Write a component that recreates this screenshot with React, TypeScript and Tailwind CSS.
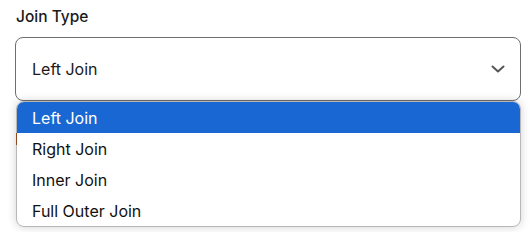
import React from "react";

export default function App() {
  const items = ["Left Join", "Right Join", "Inner Join", "Full Outer Join"];
  return (
    <div className="w-[530px] h-[232px] bg-white overflow-hidden" style={{ fontFamily: "Inter, 'Noto Sans', sans-serif" }}>
      <div className="pl-[15px] pr-[9px] pt-[6px]">
        <div className="text-[15.5px] font-medium leading-[22px] text-[#1a1a1a] pl-px">Join Type</div>
        <div className="relative mt-[9px]">
          <div className="h-[64px] rounded-[8px] border border-[#6e6e6e] bg-white flex items-center justify-between pl-[16px] pr-[14px]">
            <span className="text-[16px] text-[#1a1a1a]">Left Join</span>
            <svg width="16" height="16" viewBox="0 0 16 16" fill="none">
              <path d="M2.5 5.5 L8 10.5 L13.5 5.5" stroke="#555" strokeWidth="2" strokeLinecap="round" strokeLinejoin="round" />
            </svg>
          </div>
          <div className="absolute left-[1px] right-0 top-[64px] rounded-[8px] border border-[#b8b8b8] bg-white overflow-hidden shadow-[0_0_10px_rgba(0,0,0,0.18)]">
            {items.map((it, i) => (
              <div
                key={it}
                className={
                  i === 0
                    ? "h-[31px] flex items-center pl-[15px] text-[16px] bg-[#1967d2] text-white"
                    : "h-[31px] flex items-center pl-[15px] text-[16px] text-[#111]"
                }
              >
                {it}
              </div>
            ))}
          </div>
          <div className="absolute left-[1px] top-[96px] w-px h-[12px] bg-[#8a4a20]" />
        </div>
      </div>
    </div>
  );
}
